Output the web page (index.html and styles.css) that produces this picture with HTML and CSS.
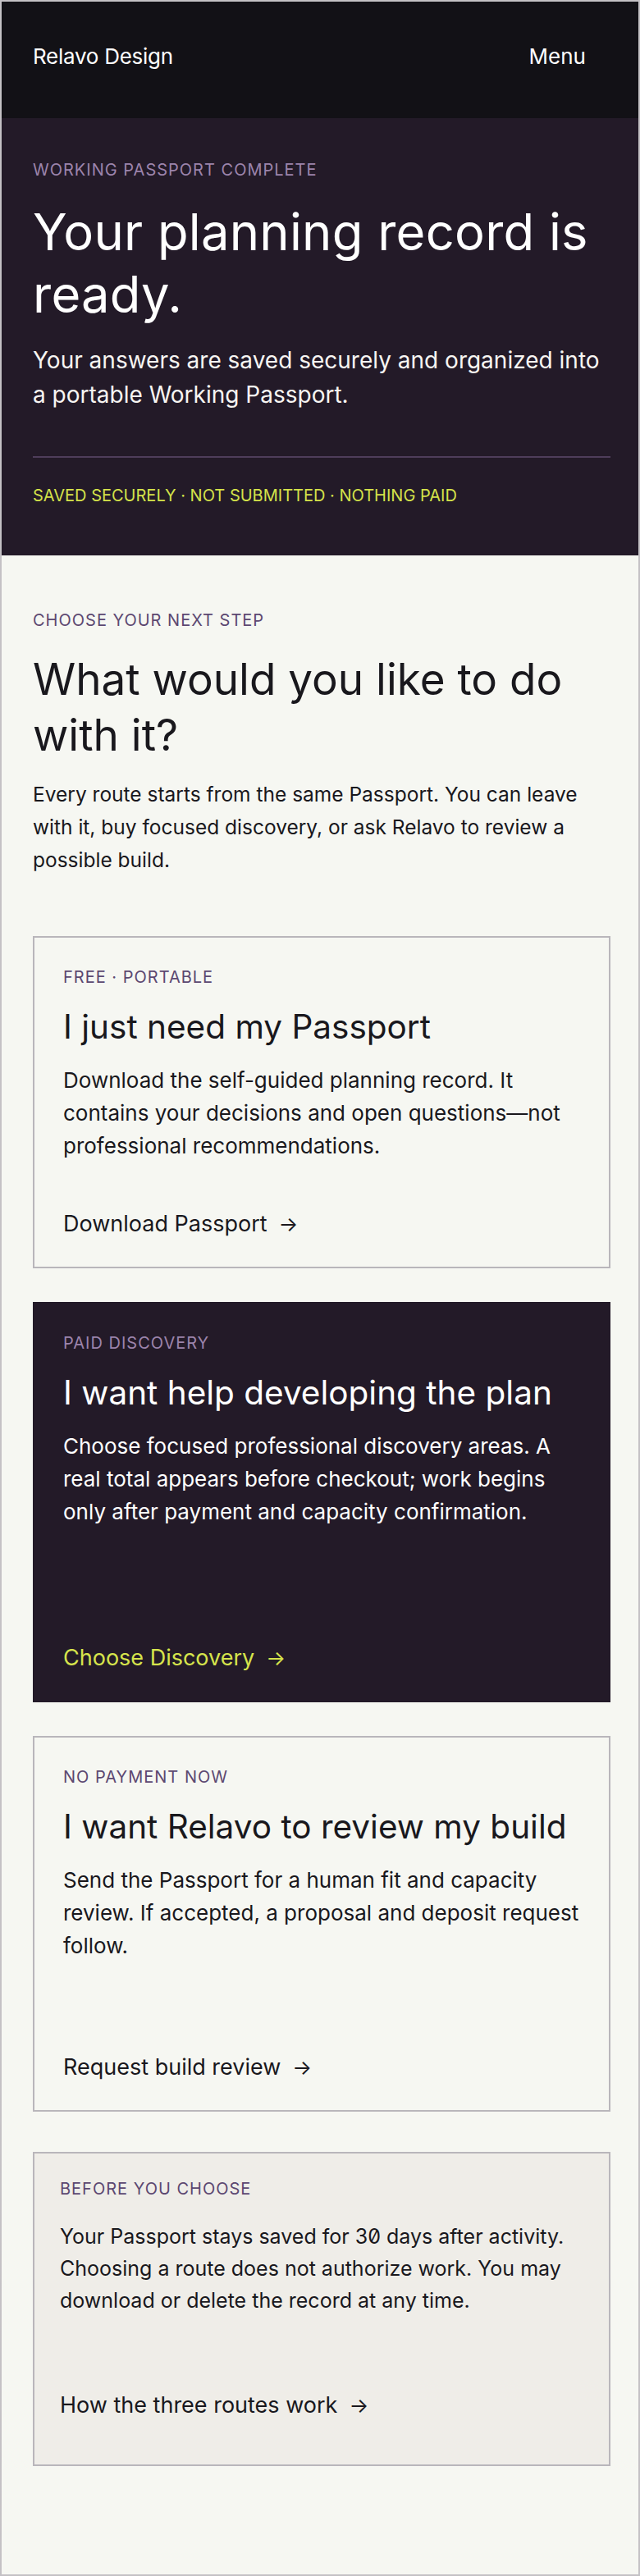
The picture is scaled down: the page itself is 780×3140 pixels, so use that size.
FILE: index.html
```html
<!DOCTYPE html>
<html lang="en">
<head>
<meta charset="utf-8">
<title>Relavo Design — Working Passport complete</title>
<link rel="stylesheet" href="styles.css">
</head>
<body>
<div class="page">
  <header class="topbar">
    <span class="brand">Relavo Design</span>
    <button class="menu" type="button">Menu</button>
  </header>

  <section class="hero">
    <p class="eyebrow eyebrow--light">Working Passport complete</p>
    <h1 class="hero-title">Your planning record is ready.</h1>
    <p class="hero-lead">Your answers are saved securely and organized into a portable Working Passport.</p>
    <p class="hero-status">Saved securely · Not submitted · Nothing paid</p>
  </section>

  <main class="choices">
    <p class="eyebrow">Choose your next step</p>
    <h2 class="choices-title">What would you like to do with it?</h2>
    <p class="choices-lead">Every route starts from the same Passport. You can leave with it, buy focused discovery, or ask Relavo to review a possible build.</p>

    <div class="route-list">
      <article class="route">
        <p class="eyebrow">Free · Portable</p>
        <h3 class="route-title">I just need my Passport</h3>
        <p class="route-body">Download the self-guided planning record. It contains your decisions and open questions—not professional recommendations.</p>
        <a class="route-link" href="#">Download Passport <span class="arrow">→</span></a>
      </article>

      <article class="route route--paid">
        <p class="eyebrow eyebrow--light">Paid discovery</p>
        <h3 class="route-title">I want help developing the plan</h3>
        <p class="route-body">Choose focused professional discovery areas. A real total appears before checkout; work begins only after payment and capacity confirmation.</p>
        <a class="route-link" href="#">Choose Discovery <span class="arrow">→</span></a>
      </article>

      <article class="route route--review">
        <p class="eyebrow">No payment now</p>
        <h3 class="route-title">I want Relavo to review my build</h3>
        <p class="route-body">Send the Passport for a human fit and capacity review. If accepted, a proposal and deposit request follow.</p>
        <a class="route-link" href="#">Request build review <span class="arrow">→</span></a>
      </article>
    </div>

    <aside class="note">
      <p class="eyebrow">Before you choose</p>
      <p class="note-body">Your Passport stays saved for 30 days after activity. Choosing a route does not authorize work. You may download or delete the record at any time.</p>
      <a class="route-link" href="#">How the three routes work <span class="arrow">→</span></a>
    </aside>
  </main>
</div>
</body>
</html>
```

FILE: styles.css
```css
* {
  box-sizing: border-box;
}

html, body {
  margin: 0;
  padding: 0;
}

body {
  font-family: Inter, "Noto Sans", "Liberation Sans", sans-serif;
  font-feature-settings: "zero" 1;
  color: #19181d;
  background: #f6f7f2;
}

p, h1, h2, h3 {
  margin: 0;
  font-weight: 400;
}

.page {
  width: 780px;
  min-height: 3140px;
  border: 2px solid #c4c1c5;
  background: #f6f7f2;
}

/* Top bar */
.topbar {
  height: 142px;
  background: #121116;
  display: flex;
  justify-content: space-between;
  align-items: center;
  padding: 0 40px 8px 38px;
}

.brand {
  color: #ffffff;
  font-size: 26px;
  line-height: 32px;
  letter-spacing: -0.01em;
}

.menu {
  font: inherit;
  color: #ffffff;
  font-size: 26px;
  line-height: 32px;
  background: none;
  border: 0;
  padding: 12px 24px;
  cursor: pointer;
}

/* Eyebrow labels */
.eyebrow {
  font-size: 20px;
  line-height: 24px;
  letter-spacing: 0.05em;
  text-transform: uppercase;
  color: #5c4871;
}

.eyebrow--light {
  color: #9c84ac;
}

/* Hero */
.hero {
  background: #231a28;
  color: #ffffff;
  padding: 51px 34px 61px 38px;
}

.hero-title {
  margin-top: 26px;
  font-size: 61.5px;
  line-height: 76px;
  letter-spacing: 0.004em;
}

.hero-lead {
  margin-top: 21px;
  font-size: 28px;
  line-height: 42px;
  color: #f7f5f2;
}

.hero-status {
  margin-top: 54px;
  border-top: 2px solid #4e3d5a;
  padding-top: 34px;
  font-size: 20px;
  line-height: 24px;
  text-transform: uppercase;
  color: #d4e24a;
}

/* Choices */
.choices {
  padding: 67px 34px 60px 38px;
}

.choices-title {
  margin-top: 26px;
  font-size: 53px;
  line-height: 68px;
}

.choices-lead {
  margin-top: 18px;
  font-size: 24.5px;
  line-height: 40px;
}

.route-list {
  margin-top: 73px;
  display: flex;
  flex-direction: column;
  gap: 41px;
}

.route {
  border: 2px solid #b9b6bb;
  padding: 36px 35px;
  display: flex;
  flex-direction: column;
  align-items: flex-start;
}

.route--paid {
  background: #231a28;
  border-color: #231a28;
  color: #ffffff;
  min-height: 488px;
}

.route--review {
  min-height: 458px;
}

.route-title {
  margin-top: 25px;
  font-size: 40.5px;
  line-height: 48px;
}

.route-body {
  margin-top: 21px;
  margin-bottom: 59px;
  font-size: 26px;
  line-height: 40px;
}

.route-link {
  margin-top: auto;
  display: inline-flex;
  align-items: center;
  gap: 14px;
  font-size: 27px;
  line-height: 32px;
  color: #19181d;
  text-decoration: none;
}

.route--paid .route-link {
  color: #d6e44c;
}

.arrow {
  font-size: 25px;
}

/* Note */
.note {
  margin-top: 49px;
  background: #efede8;
  border: 2px solid #b9b6bb;
  padding: 31px 32px 56px 31px;
  display: flex;
  flex-direction: column;
  align-items: flex-start;
}

.note-body {
  margin-top: 27px;
  margin-bottom: 92px;
  font-size: 25px;
  line-height: 39px;
}
```
